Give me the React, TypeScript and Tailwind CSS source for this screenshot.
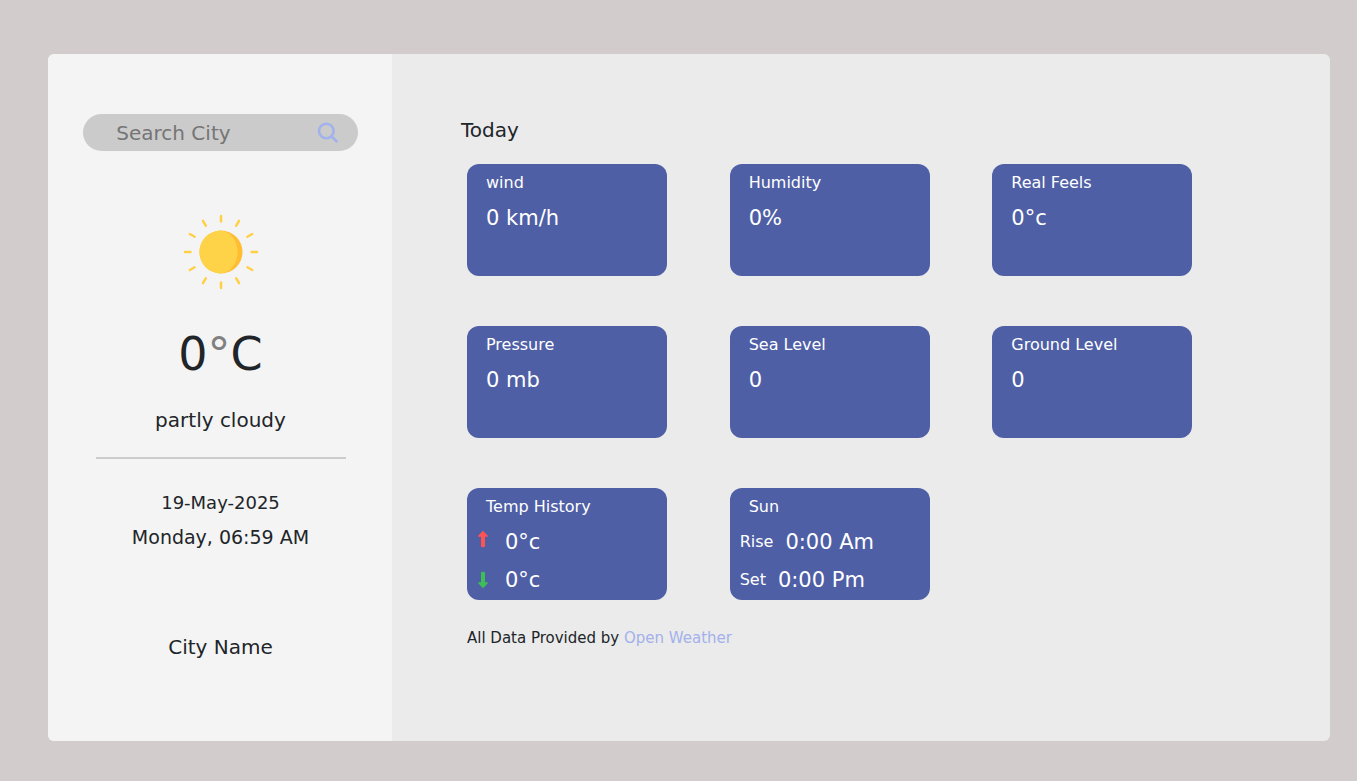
import type { ReactNode } from "react";

const RAY_ANGLES = [0, 30, 60, 90, 120, 150, 180, 210, 240, 270, 300, 330];

const METRICS = [
  { label: "wind", value: "0 km/h" },
  { label: "Humidity", value: "0%" },
  { label: "Real Feels", value: "0°c" },
  { label: "Pressure", value: "0 mb" },
  { label: "Sea Level", value: "0" },
  { label: "Ground Level", value: "0" },
];

function SunIcon() {
  return (
    <svg viewBox="0 0 76 76" className="mt-[63px] size-[76px]" aria-hidden="true">
      {RAY_ANGLES.map((angle) => (
        <line
          key={angle}
          x1="38"
          y1="2"
          x2="38"
          y2="7.5"
          stroke="#ffd046"
          strokeWidth="2.5"
          strokeLinecap="round"
          transform={`rotate(${angle} 38 38)`}
        />
      ))}
      <circle cx="38" cy="38" r="21.5" fill="#ffbd33" />
      <path d="M38 16.5a21.5 21.5 0 1 0 0 43C47.500 58.500 54.500 49.500 54.500 38S47.500 17.500 38 16.500Z" fill="#ffd348" />
    </svg>
  );
}

function SearchIcon() {
  return (
    <svg viewBox="0 0 24 24" className="size-6" fill="none" stroke="currentColor" strokeWidth="2.6" aria-hidden="true">
      <circle cx="10.300" cy="10" r="7.300" />
      <path d="M15.400 15.200L21.300 21" />
    </svg>
  );
}

function ArrowIcon({ down = false }: { down?: boolean }) {
  return (
    <svg viewBox="0 0 10 18" className={down ? "h-[18px] w-2.5 rotate-180 text-[#3dbf55]" : "mb-1.5 h-[18px] w-2.5 text-[#ff5252]"} role="img" aria-label={down ? "Low" : "High"}>
      <path d="M5 .8L9.800 5.700Q10.200 6.700 9.200 6.800H7V16Q7 17.300 5 17.300T3 16V6.800H.8Q-.2 6.700 .2 5.700Z" fill="currentColor" />
    </svg>
  );
}

function Card({ title, children }: { title: string; children: ReactNode }) {
  return (
    <section className="h-28 w-[200px] rounded-xl bg-[#4f5fa6] pt-[7px] text-white">
      <h3 className="pl-[19px] text-base leading-6">{title}</h3>
      {children}
    </section>
  );
}

export default function App() {
  return (
    <div className="flex min-h-screen bg-[#d2cccc] pt-[54px] pr-[27px] pb-10 pl-12 font-['Verdana','DejaVu_Sans',sans-serif] text-[#212529]">
      <div className="flex flex-1 overflow-hidden rounded-md bg-[#ebebeb]">
        <aside className="flex w-[344px] shrink-0 flex-col items-center bg-[#f4f4f4] pt-[60px] pl-px">
          <form
            className="flex h-[37px] w-[80%] items-center rounded-full bg-[#cbcbcb] pr-[18px] pl-[33px]"
            onSubmit={(event) => event.preventDefault()}
          >
            <input
              type="text"
              aria-label="Search City"
              placeholder="Search City"
              className="min-w-0 flex-1 bg-transparent text-xl outline-none placeholder:text-[#757575]"
            />
            <button type="submit" aria-label="Search" className="text-[#a3b1ec]">
              <SearchIcon />
            </button>
          </form>
          <SunIcon />
          <h1 className="mt-9 text-[46px] leading-14">
            0<span className="text-[#808080]">°</span>C
          </h1>
          <p className="mt-[22px] text-xl leading-8">partly cloudy</p>
          <hr className="mt-[21px] w-[250px] border-t-2 border-[#cccccc]" />
          <p className="mt-[30px] text-lg leading-7">19-May-2025</p>
          <p className="mt-1.5 text-[19px] leading-7">Monday, 06:59 AM</p>
          <p className="mt-20 text-xl leading-8">City Name</p>
        </aside>

        <main className="min-w-0 flex-1 pt-[60px]">
          <h2 className="pl-[69px] text-xl leading-8">Today</h2>
          <div className="mt-[18px] ml-[75px] grid w-[84%] grid-cols-3 gap-y-[50px]">
            {METRICS.map(({ label, value }) => (
              <Card key={label} title={label}>
                <p className="mt-[7px] pl-[19px] text-[21px] leading-8">{value}</p>
              </Card>
            ))}
            <Card title="Temp History">
              <p className="mt-[7px] flex items-center gap-[17px] pl-[11px] text-[21px] leading-8">
                <ArrowIcon />
                0°c
              </p>
              <p className="mt-1.5 flex items-center gap-[17px] pl-[11px] text-[21px] leading-8">
                <ArrowIcon down />
                0°c
              </p>
            </Card>
            <Card title="Sun">
              <p className="mt-[7px] flex items-center gap-3 pl-2.5 text-[21px] leading-8">
                <span className="text-base">Rise</span>0:00 Am
              </p>
              <p className="mt-1.5 flex items-center gap-3 pl-2.5 text-[21px] leading-8">
                <span className="text-base">Set</span>0:00 Pm
              </p>
            </Card>
          </div>
          <p className="mt-[26px] pl-[75px] text-[15px] leading-6">
            All Data Provided by{" "}
            <a href="#open-weather" className="text-[#a3b1ec]">
              Open Weather
            </a>
          </p>
        </main>
      </div>
    </div>
  );
}
